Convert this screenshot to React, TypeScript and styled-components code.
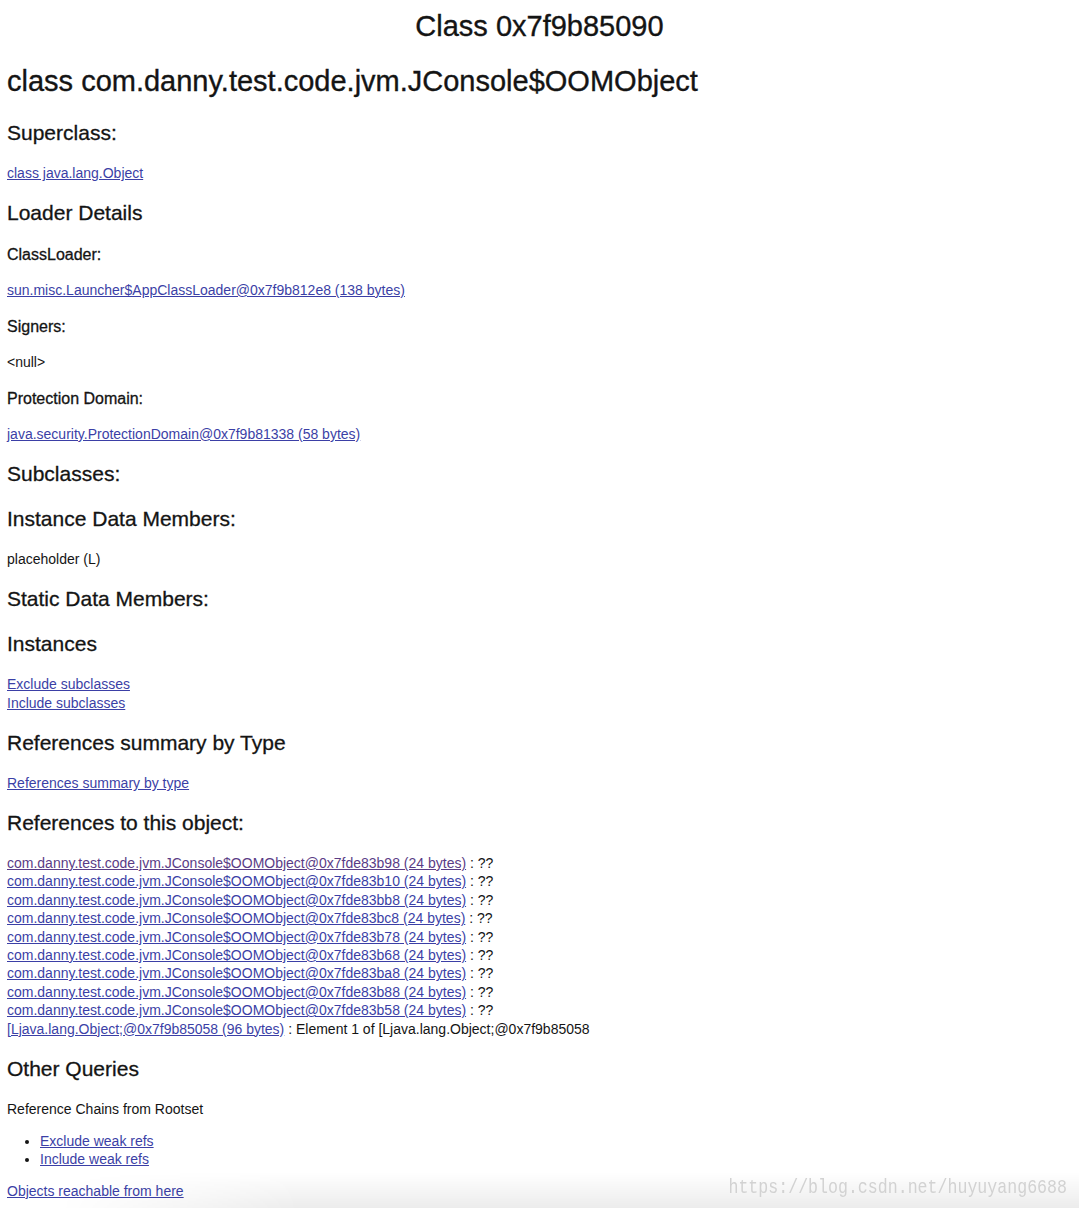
import React from "react";
import styled, { createGlobalStyle } from "styled-components";

const Global = createGlobalStyle`
  html, body { margin: 0; padding: 0; background: #ffffff; }
  body { font-family: "Liberation Sans", Arial, sans-serif; color: #141414; }
`;

const Page = styled.div`
  position: relative;
  height: 1208px;
  overflow: hidden;
  padding: 10px 7px 0;
  box-sizing: border-box;
  font-size: 14px;
  line-height: 18.4px;
`;

const Title = styled.h1<{ $center?: boolean }>`
  font-size: 29px;
  line-height: 33px;
  font-weight: normal;
  -webkit-text-stroke: 0.35px #141414;
  margin: ${(p) => (p.$center ? "0 0 22px" : "22px 0 21px")};
  text-align: ${(p) => (p.$center ? "center" : "left")};
`;

const H2 = styled.h2`
  font-size: 21px;
  line-height: 28px;
  font-weight: normal;
  -webkit-text-stroke: 0.3px #141414;
  margin: 16.5px 0 17px;
`;

const H3 = styled.h3`
  font-size: 16px;
  line-height: 22px;
  font-weight: normal;
  -webkit-text-stroke: 0.3px #141414;
  margin: 16.5px 0 15px;
`;

const Link = styled.a<{ $visited?: boolean }>`
  color: ${(p) => (p.$visited ? "#5a3c86" : "#3b3fa6")};
  text-decoration: underline;
  cursor: pointer;
`;

const Block = styled.div<{ $after?: number }>`
  margin-bottom: ${(p) => p.$after ?? 0}px;
`;

const Stack = styled.div`
  line-height: 19px;
`;

const Bullets = styled.ul`
  margin: 14.5px 0 13.5px;
  padding-left: 33px;
  list-style: disc;
  line-height: 18px;
`;

const Shade = styled.div`
  position: absolute;
  left: 0;
  right: 0;
  bottom: 0;
  height: 36px;
  pointer-events: none;
  background: linear-gradient(to bottom, rgba(0, 0, 0, 0), rgba(0, 0, 0, 0.075));
  -webkit-mask-image: linear-gradient(to right, transparent 0, transparent 60px, #000 300px, #000 100%);
  mask-image: linear-gradient(to right, transparent 0, transparent 60px, #000 300px, #000 100%);
`;

const Watermark = styled.div`
  position: absolute;
  right: 12px;
  bottom: 7px;
  font-family: "Liberation Mono", "DejaVu Sans Mono", monospace;
  font-size: 16.6px;
  line-height: 22px;
  color: #d2d2d2;
  transform: scaleY(1.18);
  transform-origin: bottom;
  pointer-events: none;
`;

const refs = [
  "0x7fde83b98",
  "0x7fde83b10",
  "0x7fde83bb8",
  "0x7fde83bc8",
  "0x7fde83b78",
  "0x7fde83b68",
  "0x7fde83ba8",
  "0x7fde83b88",
  "0x7fde83b58",
];

export default function App() {
  return (
    <Page>
      <Global />
      <Title $center>Class 0x7f9b85090</Title>
      <Title>class com.danny.test.code.jvm.JConsole$OOMObject</Title>

      <H2>Superclass:</H2>
      <Block>
        <Link>class java.lang.Object</Link>
      </Block>

      <H2>Loader Details</H2>
      <H3>ClassLoader:</H3>
      <Block>
        <Link>sun.misc.Launcher$AppClassLoader@0x7f9b812e8 (138 bytes)</Link>
      </Block>
      <H3>Signers:</H3>
      <Block>&lt;null&gt;</Block>
      <H3>Protection Domain:</H3>
      <Block>
        <Link>java.security.ProtectionDomain@0x7f9b81338 (58 bytes)</Link>
      </Block>

      <H2>Subclasses:</H2>
      <H2>Instance Data Members:</H2>
      <Block>placeholder (L)</Block>
      <H2>Static Data Members:</H2>
      <H2>Instances</H2>
      <Stack>
        <Link>Exclude subclasses</Link>
        <br />
        <Link>Include subclasses</Link>
      </Stack>

      <H2>References summary by Type</H2>
      <Block>
        <Link>References summary by type</Link>
      </Block>

      <H2>References to this object:</H2>
      <Block $after={5}>
        {refs.map((r, i) => (
          <React.Fragment key={r}>
            <Link $visited={i === 0}>com.danny.test.code.jvm.JConsole$OOMObject@{r} (24 bytes)</Link> : ??
            <br />
          </React.Fragment>
        ))}
        <Link>[Ljava.lang.Object;@0x7f9b85058 (96 bytes)</Link> : Element 1 of [Ljava.lang.Object;@0x7f9b85058
      </Block>

      <H2>Other Queries</H2>
      <Block>Reference Chains from Rootset</Block>
      <Bullets>
        <li>
          <Link>Exclude weak refs</Link>
        </li>
        <li>
          <Link>Include weak refs</Link>
        </li>
      </Bullets>
      <Block>
        <Link>Objects reachable from here</Link>
      </Block>

      <Shade />
      <Watermark>https://blog.csdn.net/huyuyang6688</Watermark>
    </Page>
  );
}
